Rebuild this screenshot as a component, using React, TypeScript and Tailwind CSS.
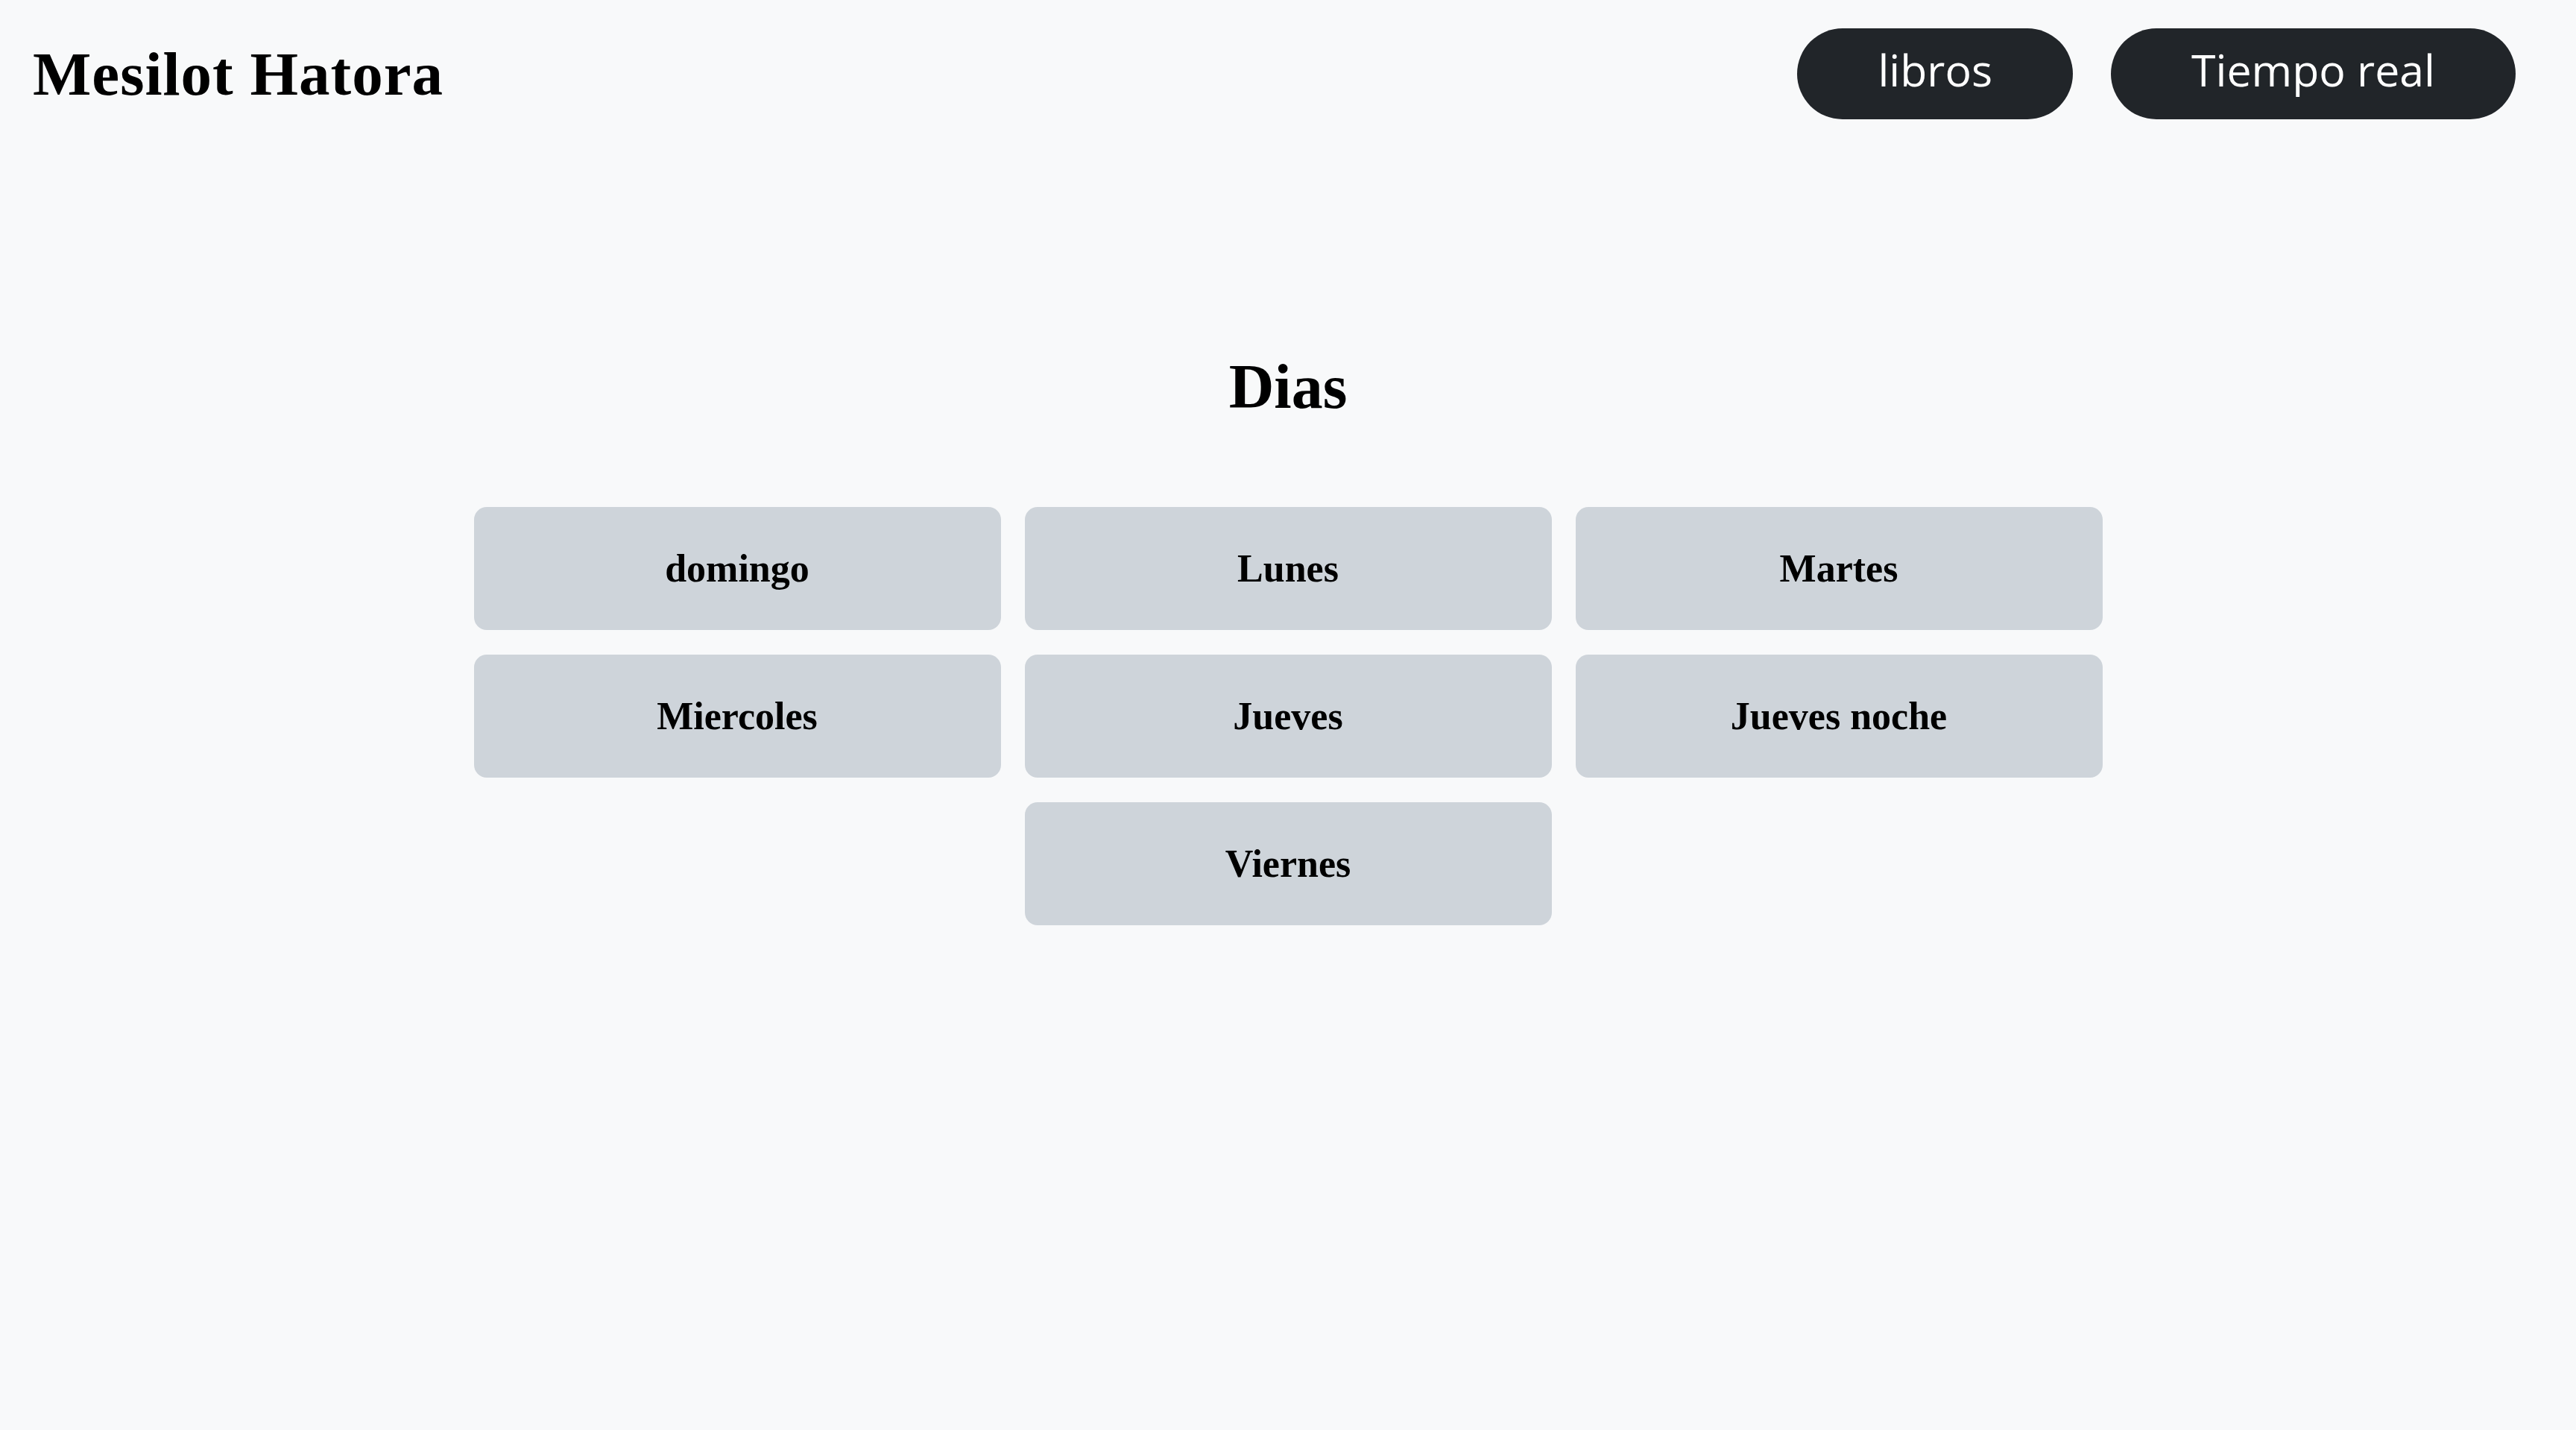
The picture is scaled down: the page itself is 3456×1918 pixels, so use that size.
const DAYS = ['domingo', 'Lunes', 'Martes', 'Miercoles', 'Jueves', 'Jueves noche', 'Viernes']

const NAV_LINKS = ['libros', 'Tiempo real']

export default function App() {
  return (
    <div className="min-h-screen bg-[#f8f9fa] text-black">
      <header className="flex items-center justify-between pl-[44px] pr-[81px] py-[38px]">
        <h1 className="font-['Liberation_Serif',serif] text-[83px] font-bold leading-none tracking-[1px]">
          Mesilot Hatora
        </h1>
        <nav className="flex items-center gap-[51px]">
          {NAV_LINKS.map((label) => (
            <button
              key={label}
              className="flex h-[122px] items-center rounded-full bg-[#212529] px-[108px] pb-[12px] font-['Open_Sans',sans-serif] text-[59px] leading-normal text-white"
            >
              {label}
            </button>
          ))}
        </nav>
      </header>

      <main className="flex flex-col items-center">
        <h2 className="mt-[279px] font-['Liberation_Serif',serif] text-[84px] font-bold leading-none">
          Dias
        </h2>
        <div className="mt-[119px] flex w-[2186px] flex-wrap justify-center gap-x-[32px] gap-y-[33px]">
          {DAYS.map((day) => (
            <button
              key={day}
              className="flex h-[165px] w-[707px] items-center justify-center rounded-[17px] bg-[#ced4da] font-['Liberation_Serif',serif] text-[52px] font-bold leading-none text-black"
            >
              {day}
            </button>
          ))}
        </div>
      </main>
    </div>
  )
}
